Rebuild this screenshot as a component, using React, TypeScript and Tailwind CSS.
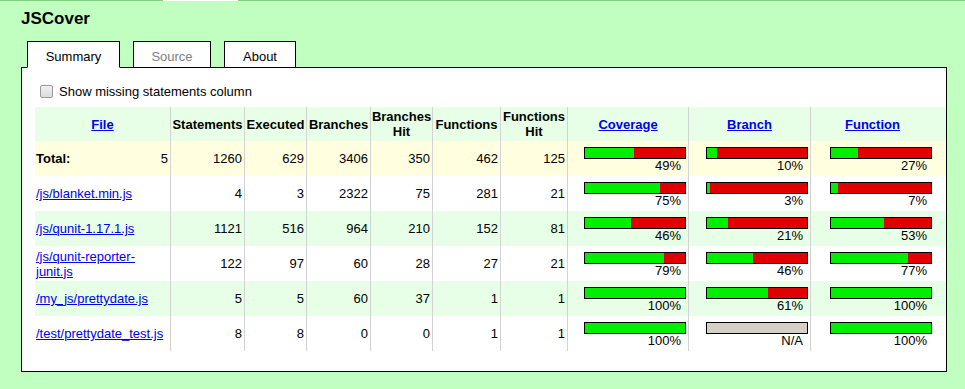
import React from "react";

type Row = {
  file: string;
  s: number;
  e: number;
  b: number;
  bh: number;
  f: number;
  fh: number;
  cov: number;
  br: number | null;
  fn: number;
};

const rows: Row[] = [
  { file: "/js/blanket.min.js", s: 4, e: 3, b: 2322, bh: 75, f: 281, fh: 21, cov: 75, br: 3, fn: 7 },
  { file: "/js/qunit-1.17.1.js", s: 1121, e: 516, b: 964, bh: 210, f: 152, fh: 81, cov: 46, br: 21, fn: 53 },
  { file: "/js/qunit-reporter-junit.js", s: 122, e: 97, b: 60, bh: 28, f: 27, fh: 21, cov: 79, br: 46, fn: 77 },
  { file: "/my_js/prettydate.js", s: 5, e: 5, b: 60, bh: 37, f: 1, fh: 1, cov: 100, br: 61, fn: 100 },
  { file: "/test/prettydate_test.js", s: 8, e: 8, b: 0, bh: 0, f: 1, fh: 1, cov: 100, br: null, fn: 100 },
];

const sep = "border-r border-[#d3d3d3]";

function Bar({ pct, last }: { pct: number | null; last?: boolean }) {
  return (
    <div className={`flex flex-col items-end pt-[6px] pr-[2px] ${last ? "" : sep}`}>
      <div className="flex h-[12px] w-[102px] border border-black bg-[#e00000]">
        {pct === null ? (
          <div className="h-full w-full bg-[#d4d0c8]" />
        ) : (
          <div className="h-full bg-[#00ee00]" style={{ width: `${pct}px` }} />
        )}
      </div>
      <div className="mr-[5px] leading-[13px]">{pct === null ? "N/A" : `${pct}%`}</div>
    </div>
  );
}

function Num({ v }: { v: number }) {
  return <div className={`flex items-center justify-end pr-[2px] ${sep}`}>{v}</div>;
}

export default function App() {
  const grid =
    "grid grid-cols-[136px_74px_62px_64px_62px_68px_67px_121px_122px_123px] leading-[15px]";
  return (
    <div className="w-[965px] h-[389px] bg-[#c0ffc0] text-[13px] text-black font-[family-name:Liberation_Sans,Arial,sans-serif] overflow-hidden">
      <div className="flex h-px">
        <div className="w-[163px] bg-[#7fcf7f]" />
        <div className="w-[75px] bg-white" />
        <div className="flex-1 bg-[#7fcf7f]" />
      </div>
      <div className="pl-[21px] pt-[8px] text-[17px] font-bold leading-[20px]">JSCover</div>
      <div className="mt-[12px] ml-[27px] flex gap-[13px] -mb-px relative z-10">
        <div className="h-[27px] w-[93px] border border-black border-b-white bg-white pt-[5px] text-center">
          Summary
        </div>
        <div className="h-[27px] w-[78px] border border-black bg-white pt-[5px] text-center text-[#808080]">
          Source
        </div>
        <div className="h-[27px] w-[72px] border border-black bg-white pt-[5px] text-center">
          About
        </div>
      </div>
      <div className="ml-[21px] h-[305px] w-[926px] border border-black bg-white pl-[13px]">
        <div className="mt-[16px] ml-[5px] flex items-center leading-[15px]">
          <div className="h-[13px] w-[13px] rounded-[2px] border border-[#9a9a9a] bg-gradient-to-b from-[#f0f0f0] to-[#dcdcdc]" />
          <span className="ml-[6px]">Show missing statements column</span>
        </div>
        <div className="mt-[8px]">
          <div className={`${grid} h-[34px] bg-[#e6ffe6] font-bold text-center`}>
            <div className={`flex items-center justify-center ${sep}`}>
              <a className="text-[#0000ee] underline">File</a>
            </div>
            <div className={`flex items-center justify-center ${sep}`}>Statements</div>
            <div className={`flex items-center justify-center ${sep}`}>Executed</div>
            <div className={`flex items-center justify-center ${sep}`}>Branches</div>
            <div className={`flex items-center justify-center ${sep}`}>Branches<br />Hit</div>
            <div className={`flex items-center justify-center ${sep}`}>Functions</div>
            <div className={`flex items-center justify-center ${sep}`}>Functions<br />Hit</div>
            <div className={`flex items-center justify-center ${sep}`}>
              <a className="text-[#0000ee] underline">Coverage</a>
            </div>
            <div className={`flex items-center justify-center ${sep}`}>
              <a className="text-[#0000ee] underline">Branch</a>
            </div>
            <div className="flex items-center justify-center">
              <a className="text-[#0000ee] underline">Function</a>
            </div>
          </div>
          <div className={`${grid} h-[35px] bg-[#ffffe0]`}>
            <div className={`flex items-center justify-between pl-[1px] pr-[2px] ${sep}`}>
              <span className="font-bold">Total:</span>
              <span>5</span>
            </div>
            <Num v={1260} />
            <Num v={629} />
            <Num v={3406} />
            <Num v={350} />
            <Num v={462} />
            <Num v={125} />
            <Bar pct={49} />
            <Bar pct={10} />
            <Bar pct={27} last />
          </div>
          {rows.map((r, i) => (
            <div key={r.file} className={`${grid} h-[35px] ${i % 2 === 1 ? "bg-[#e6ffe6]" : "bg-white"}`}>
              <div className={`flex items-center pl-[1px] pr-[2px] ${sep}`}>
                <a className="text-[#0000ee] underline">{r.file}</a>
              </div>
              <Num v={r.s} />
              <Num v={r.e} />
              <Num v={r.b} />
              <Num v={r.bh} />
              <Num v={r.f} />
              <Num v={r.fh} />
              <Bar pct={r.cov} />
              <Bar pct={r.br} />
              <Bar pct={r.fn} last />
            </div>
          ))}
        </div>
      </div>
    </div>
  );
}
